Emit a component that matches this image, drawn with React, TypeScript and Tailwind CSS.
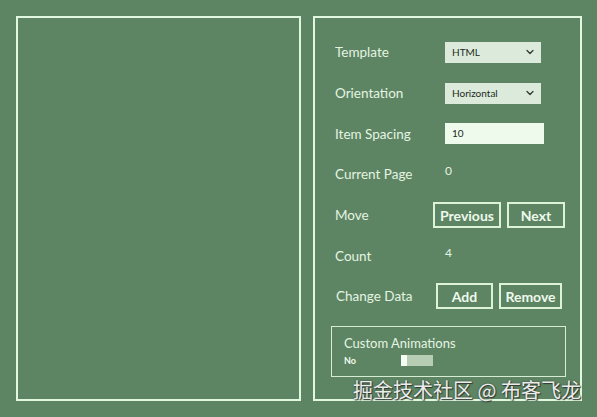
import { ChevronDown } from 'lucide-react'

const font = { fontFamily: 'Lato, "Noto Sans", sans-serif' }

function Row({ label, children }: { label: string; children?: React.ReactNode }) {
  return (
    <div className="flex h-[40.7px] items-center">
      <div className="w-[110px] text-[13.5px] text-[#e4f4e2]">{label}</div>
      {children}
    </div>
  )
}

function Select({ value }: { value: string }) {
  return (
    <div className="flex h-[21px] w-[96px] items-center justify-between bg-[#dbeadb] pl-[7px] pr-[5px] text-[10px] text-[#1d2a1e]">
      <span>{value}</span>
      <ChevronDown className="h-3 w-3 text-[#2d3a2e]" strokeWidth={2.5} />
    </div>
  )
}

function OutlineButton({ label, width }: { label: string; width: string }) {
  return (
    <button
      className={`flex h-[26px] items-center justify-center border-2 border-[#dcf2d9] text-[14px] font-bold text-[#eef9ec] ${width}`}
    >
      {label}
    </button>
  )
}

export default function App() {
  return (
    <div className="relative flex h-[417px] w-[597px] gap-[12px] bg-[#5d8563] p-[16px] pr-[15px]" style={font}>
      {/* items host */}
      <div className="h-[385px] w-[285px] border-2 border-[#e2f7df]" />

      {/* settings panel */}
      <div className="h-[385px] w-[269px] border-2 border-[#e2f7df] pl-[20px] pt-[14px]">
        <Row label="Template">
          <Select value="HTML" />
        </Row>
        <Row label="Orientation">
          <Select value="Horizontal" />
        </Row>
        <Row label="Item Spacing">
          <div className="flex h-[21px] w-[99px] items-center bg-[#eefaeb] pl-[7px] text-[10px] text-[#1d2a1e]">10</div>
        </Row>
        <Row label="Current Page">
          <span className="mb-[7px] text-[12px] text-[#e4f4e2]">0</span>
        </Row>
        <div className="flex h-[40.7px] items-center">
          <div className="w-[98px] text-[13.5px] text-[#e4f4e2]">Move</div>
          <div className="flex gap-[6px]">
            <OutlineButton label="Previous" width="w-[68px]" />
            <OutlineButton label="Next" width="w-[58px]" />
          </div>
        </div>
        <Row label="Count">
          <span className="mb-[5px] text-[12px] text-[#e4f4e2]">4</span>
        </Row>
        <div className="flex h-[40.7px] items-center">
          <div className="w-[101px] pl-[1px] text-[13.5px] text-[#e4f4e2]">Change Data</div>
          <div className="flex gap-[6px]">
            <OutlineButton label="Add" width="w-[57px]" />
            <OutlineButton label="Remove" width="w-[63px]" />
          </div>
        </div>

        <div className="ml-[-4px] mt-[9px] h-[51px] w-[235px] border border-[#d6ecd3] pl-[12px] pt-[8px]">
          <div className="text-[13px] leading-4 text-[#e4f4e2]">Custom Animations</div>
          <div className="mt-[3px] flex items-center">
            <span className="w-[57px] text-[9px] font-bold text-[#f2fbf0]">No</span>
            <div className="flex h-[11px] w-[32px]">
              <div className="h-full w-[6px] bg-[#f6fff4]" />
              <div className="h-full flex-1 bg-[#a8c2a4] [background-image:radial-gradient(#c9dbc5_0.6px,transparent_0.8px)] [background-size:2px_2px]" />
            </div>
          </div>
        </div>
      </div>

      <div
        className="absolute left-[353px] top-[377px] text-[20px] leading-[26px] text-[#ececec] [text-shadow:1px_1px_1px_#2e3a2f,0_0_2px_#3b473c]"
        style={{ fontFamily: '"Noto Sans CJK SC", "Noto Sans", sans-serif' }}
      >
        掘金技术社区 @ 布客飞龙
      </div>
    </div>
  )
}
